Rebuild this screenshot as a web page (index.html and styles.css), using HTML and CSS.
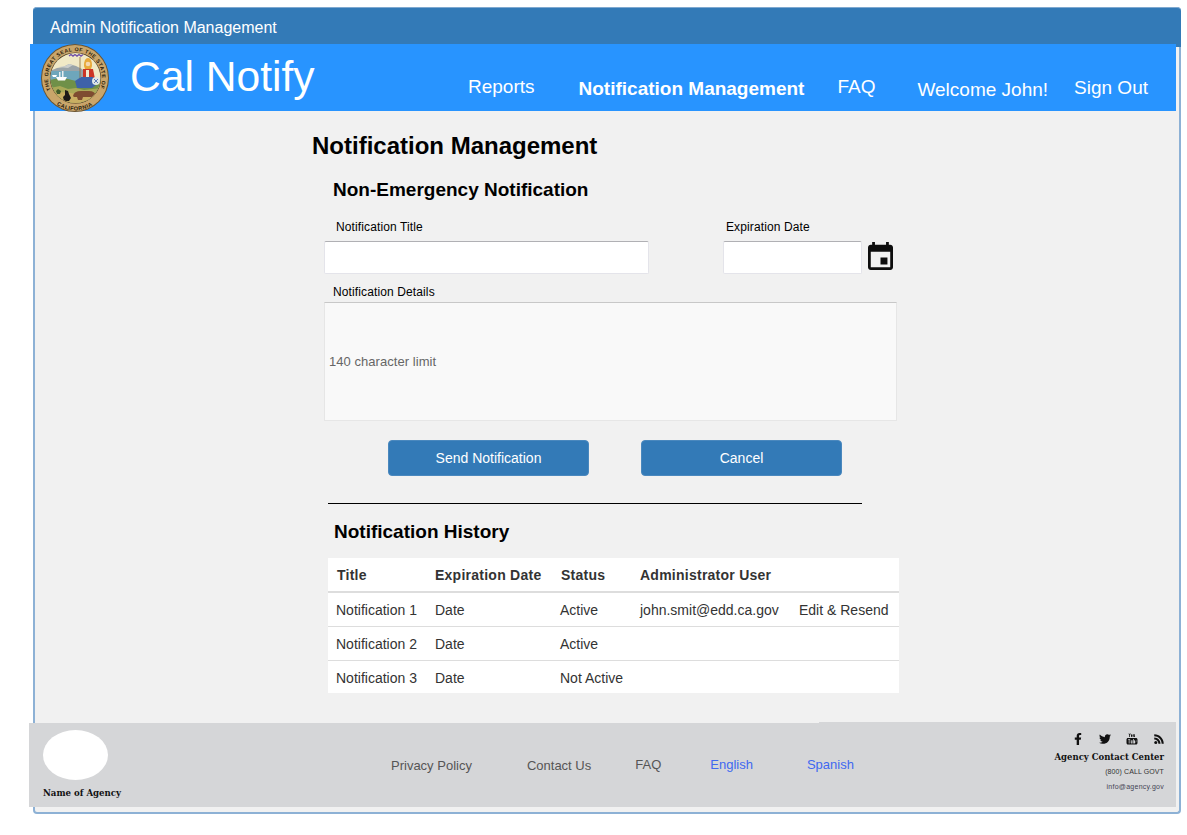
FILE: index.html
```html
<!DOCTYPE html>
<html lang="en">
<head>
<meta charset="utf-8">
<title>Cal Notify</title>
<link rel="stylesheet" href="styles.css">
</head>
<body>
<div class="panel">
  <div class="panel-head">Admin Notification Management</div>
  <header class="banner">
    <svg class="seal" viewBox="0 0 68 68" aria-label="Great Seal of the State of California">
      <defs>
        <clipPath id="inner"><circle cx="34.500" cy="34" r="25"/></clipPath>
        <path id="arcTop" d="M9.800 46A27 27 0 1 1 58.200 46"/>
        <path id="arcBottom" d="M15.500 60.700A32.500 32.500 0 0 0 52.500 60.700"/>
      </defs>
      <circle cx="34" cy="34" r="34" fill="#6b5430"/>
      <circle cx="34" cy="34" r="33" fill="#c9a56a"/>
      <circle cx="34.500" cy="34" r="25.600" fill="#4b3a20"/>
      <g clip-path="url(#inner)">
        <rect x="8" y="8" width="54" height="54" fill="#f0e9c6"/>
        <path d="M9 27l7-3 6-1 6-3 7 2 6 3 3 3v5H9z" fill="#9aa4a8"/>
        <path d="M18 23l6-1 4-2 4 1-5 3z" fill="#c9cdcb"/>
        <rect x="9" y="27" width="30" height="10" fill="#6ea6bb"/>
        <path d="M9 36q10-3 18-1l12 3 22-2v26H9z" fill="#6f9048"/>
        <path d="M9 44l10-2 8 3 8-1 8 2 18-2v18H9z" fill="#a9a958"/>
        <path d="M9 50q10-3 20-1t32 0v13H9z" fill="#c9ae62"/>
        <path d="M15 33h11l-2 3.500h-7z" fill="#fdfdfd"/>
        <path d="M18 33v-5h1.500v5zM21 33v-6h1.500v6z" fill="#e8eef0"/>
        <path d="M11 31h5l-1 2h-3z" fill="#fff"/>
        <path d="M28 12l2-1.500 2 1.500 2-1.500 2 1.500 2-1.500 2 1.500 2-1.500" stroke="#6f4fa8" stroke-width="1.400" fill="none"/>
        <path d="M39 13v25" stroke="#8a6a3a" stroke-width=".8"/>
        <path d="M43 22q0-8 4-8t4 8l-1 3h-6z" fill="#e8a93a"/>
        <circle cx="47" cy="20" r="2.300" fill="#f4d7b0"/>
        <path d="M42 25h10l2 10H42z" fill="#cc3526"/>
        <path d="M45 26h3v8h-3z" fill="#f2ead0"/>
        <path d="M34 37l6-4h12l3 8-4 3H36z" fill="#3e62a8"/>
        <circle cx="55" cy="37" r="4" fill="#dfe6e8"/>
        <path d="M53 35l4 4M57 35l-4 4" stroke="#3e62a8" stroke-width=".8"/>
        <path d="M32 52q1-5 8-5h8q6 0 7 5v4h-3l-1-3h-9l-1 3h-4l-1-3h-3z" fill="#7e4c30"/>
        <path d="M24 46l3 1 1 3 2 4-2 3h-5l-1-4 2-2z" fill="#1e1a18"/>
        <path d="M15 47l2-2 3 2-1 3h-3z" fill="#3f5a2a"/>
      </g>
      <text class="seal-text" font-size="5.200"><textPath href="#arcTop" textLength="107" lengthAdjust="spacing">THE GREAT SEAL OF THE STATE OF</textPath></text>
      <text class="seal-text" font-size="5.600"><textPath href="#arcBottom" textLength="38" lengthAdjust="spacing">CALIFORNIA</textPath></text>
    </svg>
    <div class="brand">Cal Notify</div>
    <nav class="nav">
      <a class="nav-item nav-reports">Reports</a>
      <a class="nav-item nav-active">Notification Management</a>
      <a class="nav-item nav-faq">FAQ</a>
      <span class="nav-item nav-welcome">Welcome John!</span>
      <a class="nav-item nav-signout">Sign Out</a>
    </nav>
  </header>

  <main class="main">
    <h1 class="page-title">Notification Management</h1>
    <h2 class="section-title">Non-Emergency Notification</h2>
    <form class="form">
      <div class="form-row">
        <div class="field field-title">
          <label class="label label-title">Notification Title</label>
          <input class="input input-title" type="text">
        </div>
        <div class="field field-date">
          <label class="label label-date">Expiration Date</label>
          <div class="date-row">
            <input class="input input-date" type="text">
            <svg class="calendar" viewBox="3 1 18 20" preserveAspectRatio="none"><path d="M17 12h-5v5h5v-5zM16 1v2H8V1H6v2H5c-1.110 0-1.990.9-1.990 2L3 19c0 1.100.89 2 2 2h14c1.100 0 2-.9 2-2V5c0-1.100-.9-2-2-2h-1V1h-2zm3 18H5V8h14v11z"/></svg>
          </div>
        </div>
      </div>
      <label class="label label-details">Notification Details</label>
      <div class="details">140 character limit</div>
      <div class="actions">
        <button class="btn" type="button">Send Notification</button>
        <button class="btn" type="button">Cancel</button>
      </div>
    </form>
    <hr class="rule">
    <h2 class="history-title">Notification History</h2>
    <table class="table">
      <thead>
        <tr><th class="col-1">Title</th><th class="col-2">Expiration Date</th><th class="col-3">Status</th><th class="col-4">Administrator User</th><th class="col-5"></th></tr>
      </thead>
      <tbody>
        <tr><td>Notification 1</td><td>Date</td><td>Active</td><td>john.smit@edd.ca.gov</td><td>Edit &amp; Resend</td></tr>
        <tr><td>Notification 2</td><td>Date</td><td>Active</td><td></td><td></td></tr>
        <tr><td>Notification 3</td><td>Date</td><td>Not Active</td><td></td><td></td></tr>
      </tbody>
    </table>
  </main>

  <footer class="footer">
    <div class="agency">
      <div class="agency-logo"></div>
      <div class="agency-name">Name of Agency</div>
    </div>
    <div class="links">
      <a class="link link-privacy">Privacy Policy</a>
      <a class="link link-contact">Contact Us</a>
      <a class="link link-faq">FAQ</a>
      <a class="link lang link-english">English</a>
      <a class="link lang link-spanish">Spanish</a>
    </div>
    <div class="contact">
      <div class="social">
        <svg class="social-icon" viewBox="0 0 320 512"><path d="M279.140 288l14.220-92.660h-88.910v-60.130c0-25.350 12.420-50.060 52.240-50.060h40.420V6.260S260.430 0 225.360 0c-73.220 0-121.080 44.380-121.080 124.720v70.620H22.890V288h81.390v224h100.170V288z"/></svg>
        <svg class="social-icon" viewBox="0 0 512 512"><path d="M459.37 151.716c.325 4.548.325 9.097.325 13.645 0 138.720-105.583 298.558-298.558 298.558-59.452 0-114.680-17.219-161.137-47.106 8.447.974 16.568 1.299 25.340 1.299 49.055 0 94.213-16.568 130.274-44.832-46.132-.975-84.792-31.188-98.112-72.772 6.498.974 12.995 1.624 19.818 1.624 9.421 0 18.843-1.300 27.614-3.573-48.081-9.747-84.143-51.980-84.143-102.985v-1.299c13.969 7.797 30.214 12.670 47.431 13.319-28.264-18.843-46.781-51.005-46.781-87.391 0-19.492 5.197-37.360 14.294-52.954 51.655 63.675 129.300 105.258 216.365 109.807-1.624-7.797-2.599-15.918-2.599-24.040 0-57.828 46.782-104.934 104.934-104.934 30.213 0 57.502 12.670 76.670 33.137 23.715-4.548 46.456-13.320 66.599-25.340-7.798 24.366-24.366 44.833-46.132 57.827 21.117-2.273 41.584-8.122 60.426-16.243-14.292 20.791-32.161 39.308-52.628 54.253z"/></svg>
        <svg class="social-icon" viewBox="0 0 24 24"><path d="M5 1l1.500 3.500V8H8V4.500L9.500 1H8L7.200 3 6.500 1zM11.500 2.500C10.500 2.500 10 3 10 4v2.500C10 7.500 10.500 8 11.500 8S13 7.500 13 6.500V4c0-1-.5-1.500-1.500-1.500zM14.500 2.500V7c0 .8.900 1.200 1.600.6l.4-.3V8H18V2.500h-1.500v4l-.5.300V2.500z"/><path fill-rule="evenodd" d="M4 10h16c1.700 0 3 1.300 3 3v7c0 1.700-1.300 3-3 3H4c-1.700 0-3-1.300-3-3v-7c0-1.700 1.300-3 3-3zM4 12v1.200h1.500V21H7v-7.800h1.500V12zM9.500 14.500V20c0 .9 1 1.200 1.700.5l.3-.3v.8H13v-6.500h-1.500v4.500l-.5.300v-4.800zM14.500 12v9H16v-.5c.8.800 2.500.7 2.500-1V16c0-1.700-1.700-1.800-2.500-1v-3zM20 15h1v4z"/></svg>
        <svg class="social-icon" viewBox="0 0 24 24"><circle cx="5.500" cy="19" r="3"/><path d="M2.500 9v4.200c4.600 0 8.300 3.700 8.300 8.300H15C15 14.600 9.400 9 2.500 9z"/><path d="M2.500 2.500v4.200c8.200 0 14.800 6.600 14.800 14.800h4.200C21.500 11 13 2.500 2.500 2.500z"/></svg>
      </div>
      <div class="contact-name">Agency Contact Center</div>
      <div class="contact-phone">(800) CALL GOVT</div>
      <div class="contact-mail">info@agency.gov</div>
    </div>
  </footer>
</div>
</body>
</html>
```

FILE: styles.css
```css
* { box-sizing: border-box; }
html, body { margin: 0; padding: 0; background: #fff; }
body { font-family: "Liberation Sans", Arial, sans-serif; color: #333; overflow-x: hidden; }

.panel {
  width: 1148px;
  margin: 7px 0 0 33px;
  background: #f1f1f1;
  border: 2px solid #8db1d5;
  border-top: 0;
  border-radius: 4px;
  padding-bottom: 5px;
}
.panel-head {
  height: 40px;
  margin: 0 -2px;
  padding: 9px 17px 0;
  background: #337ab7;
  color: #fff;
  font-size: 16px;
  line-height: 22px;
  border-radius: 4px 4px 0 0;
  border-top: 1px solid #7fa9d0;
}

.banner {
  display: flex;
  position: relative;
  width: 1146px;
  height: 67px;
  margin: -3px 0 0 -5px;
  padding-left: 11px;
  background: #2894ff;
  color: #fff;
}
.seal { width: 68px; height: 68px; flex: none; }
.seal-text { font-family: "Liberation Sans", sans-serif; font-weight: bold; fill: #2a1c0c; }
.brand { width: 186px; margin-left: 21px; font-size: 42.600px; line-height: 50px; padding-top: 7px; white-space: nowrap; }

.nav { display: flex; font-size: 19px; line-height: 22px; }
.nav-item { display: block; white-space: nowrap; }
.nav-reports { margin: 32px 0 0 152px; }
.nav-active { margin: 34px 0 0 44px; font-weight: bold; }
.nav-faq { margin: 32px 0 0 33px; }
.nav-welcome { margin: 35px 0 0 42px; }
.nav-signout { margin: 33px 0 0 26px; }

.main { padding: 21px 0 0 277px; color: #000; }
.page-title { margin: 0; font-size: 24px; line-height: 28px; font-weight: bold; }
.section-title { margin: 18px 0 0 21px; font-size: 19px; line-height: 24px; font-weight: bold; }

.form { margin: 18px 0 0 12px; width: 573px; }
.form-row { display: flex; }
.field { display: flex; flex-direction: column; }
.field-title { width: 399px; }
.label { display: block; font-size: 12px; line-height: 14px; color: #000; letter-spacing: .12px; }
.label-title { margin: 0 0 7px 12px; }
.label-date { margin: 0 0 7px 3px; }
.label-details { margin: 11px 0 3px 9px; }
.input {
  display: block;
  height: 33px;
  padding: 0 5px;
  background: #fff;
  border: 1px solid #e4e4ea;
  border-top-color: #b0b0b4;
  border-radius: 2px;
  outline: 0;
}
.input-title { width: 325px; }
.input-date { width: 139px; }
.date-row { display: flex; align-items: flex-start; }
.calendar { width: 25px; height: 28px; margin: 1px 0 0 6px; flex: none; fill: #0d0d0d; }

.details {
  display: flex;
  align-items: center;
  width: 573px;
  height: 119px;
  padding-left: 4px;
  background: #f9f9f9;
  border: 1px solid #e6e6e6;
  border-top-color: #c8c8c8;
  color: #666;
  font-size: 13px;
  letter-spacing: .05px;
}
.actions { display: flex; gap: 52px; margin: 19px 0 0 64px; }
.btn {
  width: 201px;
  height: 36px;
  padding: 0;
  background: #337ab7;
  border: 1px solid #4a88be;
  border-radius: 4px;
  color: #fff;
  font: 14px "Liberation Sans", Arial, sans-serif;
}

.rule { width: 534px; height: 1px; margin: 27px 0 0 16px; border: 0; background: #000; }
.history-title { margin: 16px 0 0 22px; font-size: 19px; line-height: 23px; font-weight: bold; }

.table {
  width: 571px;
  margin: 15px 0 0 16px;
  border-collapse: collapse;
  table-layout: fixed;
  background: #fff;
  color: #333;
  font-size: 14px;
}
.col-1 { width: 99px; }
.col-2 { width: 125px; }
.col-3 { width: 80px; }
.col-4 { width: 159px; }
.col-5 { width: 108px; }
th {
  height: 34px;
  padding: 0 0 0 9px;
  border-bottom: 2px solid #ddd;
  text-align: left;
  font-weight: bold;
  letter-spacing: .25px;
  white-space: nowrap;
}
td {
  height: 34px;
  padding: 1px 0 0 8px;
  border-bottom: 1px solid #ddd;
  white-space: nowrap;
}
th:nth-child(2), th:nth-child(4) { padding-left: 8px; }
tbody tr:last-child td { height: 33px; padding-top: 2px; border-bottom: 0; }

.footer {
  display: flex;
  position: relative;
  width: 1147px;
  height: 84px;
  margin: 30px 0 0 -6px;
  background: #d5d6d8;
}
.footer::before {
  content: "";
  position: absolute;
  top: -1px;
  right: 0;
  width: 357px;
  height: 1px;
  background: #d5d6d8;
}
.agency { width: 100px; padding: 7px 0 0 14px; flex: none; }
.agency-logo { width: 65px; height: 50px; border-radius: 50%; background: #fff; }
.agency-name {
  margin-top: 8px;
  font: bold 8.600px/11px "DejaVu Serif", serif;
  color: #111;
  white-space: nowrap;
}

.links { display: flex; font-size: 13px; line-height: 16px; color: #555; }
.link { display: block; white-space: nowrap; margin-top: 34px; }
.lang { color: #4068f0; }
.link-privacy { margin-left: 262px; margin-top: 35px; }
.link-contact { margin-left: 55px; margin-top: 35px; }
.link-faq { margin-left: 44px; }
.link-english { margin-left: 49px; }
.link-spanish { margin-left: 54px; }

.contact { margin-left: auto; padding: 10px 12px 0 0; text-align: right; flex: none; color: #222; }
.social { display: flex; justify-content: flex-end; align-items: center; height: 12px; margin-right: -1px; }
.social-icon { width: 12px; height: 12px; margin-left: 15px; fill: #111; flex: none; }
.contact-name { margin-top: 6px; font: bold 8.500px/12px "DejaVu Serif", serif; color: #111; white-space: nowrap; }
.contact-phone { margin-top: 4px; font-size: 7px; line-height: 10px; color: #333; letter-spacing: .1px; }
.contact-mail { margin-top: 5px; font-size: 7px; line-height: 10px; color: #445; letter-spacing: .25px; }
```
